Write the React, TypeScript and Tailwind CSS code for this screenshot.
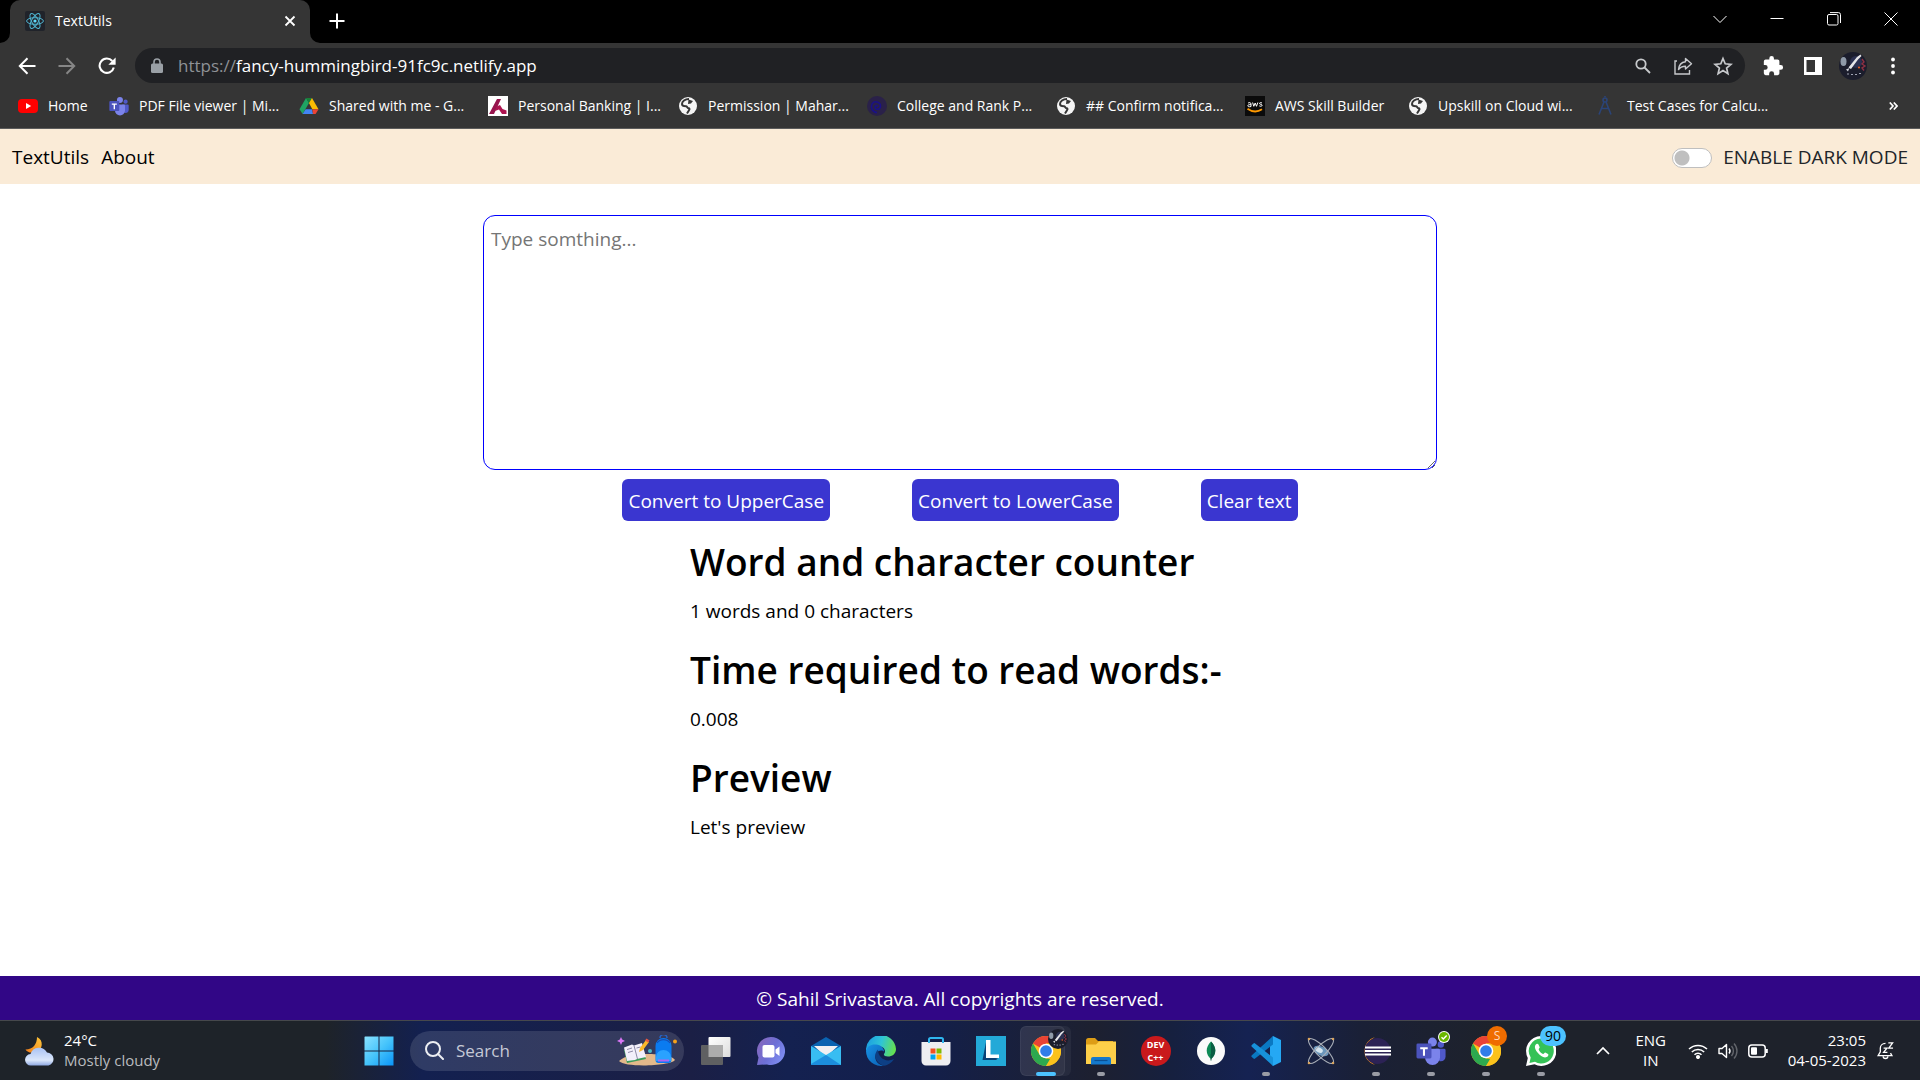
import React, { useState } from "react";
import type { ReactNode } from "react";

/* ---------- small icons ---------- */

const ReactLogo = () => (
  <svg viewBox="0 0 20 20" className="size-5">
    <rect width="20" height="20" rx="2" fill="#20232a" />
    <g fill="none" stroke="#4fb4d0" strokeWidth="1">
      <ellipse cx="10" cy="10" rx="8.4" ry="3.3" />
      <ellipse cx="10" cy="10" rx="8.4" ry="3.3" transform="rotate(60 10 10)" />
      <ellipse cx="10" cy="10" rx="8.4" ry="3.3" transform="rotate(120 10 10)" />
    </g>
    <circle cx="10" cy="10" r="1.6" fill="#61dafb" />
  </svg>
);

const YouTube = () => (
  <svg viewBox="0 0 20 20" className="size-5">
    <rect y="3" width="20" height="14" rx="4" fill="#f00" />
    <path d="M8 7l5.2 3L8 13z" fill="#fff" />
  </svg>
);

const Teams = ({ className }: { className: string }) => (
  <svg viewBox="0 0 32 32" className={className}>
    <circle cx="26.5" cy="9" r="3.4" fill="#5059c9" />
    <path d="M21 13.5h9a1.5 1.5 0 0 1 1.5 1.5v7a5 5 0 0 1-5 5H25z" fill="#5059c9" />
    <circle cx="17.5" cy="6.5" r="4.8" fill="#7b83eb" />
    <path d="M10 13.5h14a1.6 1.6 0 0 1 1.6 1.6V23a8 8 0 0 1-16 0z" fill="#7b83eb" />
    <rect x="0.5" y="8" width="16" height="16" rx="1.5" fill="#4b53bc" />
    <path d="M4.5 12h8v2H9.6v7H7.4v-7H4.5z" fill="#fff" />
  </svg>
);

const Drive = () => (
  <svg viewBox="0 0 20 20" className="size-5">
    <path d="M7 2L0.5 13.2 3.6 18 10 7z" fill="#1fa463" />
    <path d="M7 2h6L10 7z" fill="#188038" />
    <path d="M13 2l6.5 11.2h-6.2L10 7z" fill="#fbbc04" />
    <path d="M6.6 13.2L3.6 18H14l-1-4.8z" fill="#4285f4" />
    <path d="M13.3 13.2h6.2L16.6 18H14z" fill="#ea4335" />
  </svg>
);

const Axis = () => (
  <svg viewBox="0 0 20 20" className="size-5">
    <rect width="20" height="20" fill="#fff" />
    <path d="M9 3h4L6 18H1z" fill="#97144d" />
    <path d="M8.500 10.500l3.500-1.500 2.500 4 4 1.500V18h-4.500l-3-4.500-4 1.500z" fill="#ae1450" />
  </svg>
);

const Globe = () => (
  <svg viewBox="0 0 20 20" className="size-5">
    <circle cx="10" cy="10" r="9" fill="#f4f4f4" />
    <path d="M11 3C7 3 4 5.500 4 8c0 1.800 2.500 2.200 4 2.200 1.200 0 1 2 2.500 2 1.200 0 1.300 1 .5 2L9 17.500" fill="none" stroke="#353535" strokeWidth="2" />
    <path d="M10.500 3.500l4.500 1.500-2 2.500-3 .5z" fill="#353535" />
  </svg>
);

const Swirl = () => (
  <svg viewBox="0 0 20 20" className="size-5">
    <circle cx="10" cy="10" r="10" fill="#2a2149" />
    <path d="M10.500 10.500c0-1.500-2.500-1-2.500.8 0 3 5.500 2.700 5.500-1.300S7 4 5 8s1 8.500 5 8.500" fill="none" stroke="#1a1187" strokeWidth="1.600" />
  </svg>
);

const Aws = () => (
  <svg viewBox="0 0 20 20" className="size-5">
    <rect width="20" height="20" fill="#0b0b0b" />
    <path d="M3 7.200c1-1 3-.8 3 .8v2.500c-2 .5-3.200.2-3.200-.8S4.500 8.500 6 8.700M7.600 6.500l1.200 3.800L10.200 7l1.300 3.300 1.300-3.800M17 7c-1.200-.7-2.700-.3-2.500.6.2.9 2.700.6 2.600 1.800-.1 1-1.700 1.100-2.800.5" fill="none" stroke="#fff" strokeWidth="1" />
    <path d="M2.500 12.800c5 3.500 10 3.500 14.500.5" fill="none" stroke="#f90" strokeWidth="1.800" />
  </svg>
);

const Compass = () => (
  <svg viewBox="0 0 20 20" className="size-5">
    <g fill="none" stroke="#2b4478" strokeWidth="1.600">
      <circle cx="8" cy="4" r="2" />
      <path d="M8 1V0M7 6L2 18.500M9 6l5 12.500M4 12.500h8" />
    </g>
  </svg>
);

/* ---------- browser chrome ---------- */

const bookmarks: { label: string; icon: ReactNode; width: string }[] = [
  { label: "Home", icon: <YouTube />, width: "w-[91px]" },
  { label: "PDF File viewer | Mi...", icon: <Teams className="size-5" />, width: "w-[190px]" },
  { label: "Shared with me - G...", icon: <Drive />, width: "w-[189px]" },
  { label: "Personal Banking | I...", icon: <Axis />, width: "w-[190px]" },
  { label: "Permission | Mahar...", icon: <Globe />, width: "w-[189px]" },
  { label: "College and Rank P...", icon: <Swirl />, width: "w-[189px]" },
  { label: "## Confirm notifica...", icon: <Globe />, width: "w-[189px]" },
  { label: "AWS Skill Builder", icon: <Aws />, width: "w-[163px]" },
  { label: "Upskill on Cloud wi...", icon: <Globe />, width: "w-[189px]" },
  { label: "Test Cases for Calcu...", icon: <Compass />, width: "w-[189px]" },
];

const WindowButton = ({ label, children }: { label: string; children: ReactNode }) => (
  <button aria-label={label} className="flex h-[38px] w-[57px] items-center justify-center">
    <svg viewBox="0 0 14 14" className="size-3.5" fill="none" stroke="#fff" strokeWidth="1">
      {children}
    </svg>
  </button>
);

const IconButton = ({ label, children }: { label: string; children: ReactNode }) => (
  <button aria-label={label} className="flex h-9 w-10 items-center justify-center">
    {children}
  </button>
);

const TabStrip = () => (
  <div className="flex h-[43px] bg-black pr-px pl-2.5">
    <div className="relative flex w-[300px] items-center rounded-t-[10px] bg-[#353535] pr-3 pb-0.5 pl-[15px]">
      <svg viewBox="0 0 10 10" className="absolute bottom-0 -left-2.5 size-2.5">
        <path d="M10 0v10H0A10 10 0 0 0 10 0z" fill="#353535" />
      </svg>
      <svg viewBox="0 0 10 10" className="absolute -right-2.5 bottom-0 size-2.5">
        <path d="M0 0v10h10A10 10 0 0 1 0 0z" fill="#353535" />
      </svg>
      <ReactLogo />
      <span className="ml-2.5 flex-1 text-sm text-white">TextUtils</span>
      <button aria-label="Close tab" className="flex size-4 items-center justify-center">
        <svg viewBox="0 0 12 12" className="size-3" stroke="#fff" strokeWidth="1.800">
          <path d="M1.500 1.500l9 9M10.500 1.500l-9 9" />
        </svg>
      </button>
    </div>
    <button aria-label="New tab" className="ml-[17px] flex h-[42px] w-5 items-center justify-center">
      <svg viewBox="0 0 16 16" className="size-4" stroke="#fff" strokeWidth="2">
        <path d="M8 0.500v15M0.500 8h15" />
      </svg>
    </button>
    <div className="ml-auto flex">
      <WindowButton label="Search tabs">
        <path d="M0.500 4L7 10.500 13.500 4" />
      </WindowButton>
      <WindowButton label="Minimize">
        <path d="M0.500 6.500h13" />
      </WindowButton>
      <WindowButton label="Restore">
        <rect x="0.500" y="2.500" width="10.500" height="10.500" rx="1.500" />
        <path d="M3 0.600h8.500a2 2 0 0 1 2 2V11" />
      </WindowButton>
      <WindowButton label="Close">
        <path d="M0.500 0.500l13 13M13.500 0.500l-13 13" />
      </WindowButton>
    </div>
  </div>
);

const AddressBar = () => (
  <div className="flex h-[45px] items-center bg-[#353535] pr-[7px] pl-[7px]">
    <IconButton label="Back">
      <svg viewBox="0 0 18 18" className="size-[18px]" fill="none" stroke="#fff" strokeWidth="2">
        <path d="M17.500 9H2M9.500 1.300L1.800 9l7.700 7.700" />
      </svg>
    </IconButton>
    <IconButton label="Forward">
      <svg viewBox="0 0 18 18" className="size-[18px]" fill="none" stroke="#868686" strokeWidth="2">
        <path d="M0.500 9H16M8.500 1.300L16.200 9l-7.700 7.700" />
      </svg>
    </IconButton>
    <IconButton label="Reload">
      <svg viewBox="0 0 18 18" className="size-[18px]">
        <path d="M15.800 10.500A7.200 7.200 0 1 1 14.300 4" fill="none" stroke="#fff" strokeWidth="2.100" />
        <path d="M17.600 0.500v7.300h-7.300z" fill="#fff" />
      </svg>
    </IconButton>
    <div className="ml-2 flex h-[35px] flex-1 items-center rounded-full bg-[#202124] pr-0.5 pl-4">
      <svg viewBox="0 0 12 16" className="h-4 w-3">
        <rect y="5.500" width="12" height="9.500" rx="1.500" fill="#9aa0a6" />
        <path d="M3 6V4a3 3 0 0 1 6 0v2" fill="none" stroke="#9aa0a6" strokeWidth="1.600" />
      </svg>
      <span className="ml-[15px] flex-1 text-[17px] text-white">
        <span className="text-[#8e9196]">https://</span>fancy-hummingbird-91fc9c.netlify.app
      </span>
      <IconButton label="Zoom">
        <svg viewBox="0 0 16 16" className="size-4" fill="none" stroke="#c7c9cc" strokeWidth="1.800">
          <circle cx="6" cy="6" r="4.700" />
          <path d="M9.500 9.500l5.500 5.500" />
        </svg>
      </IconButton>
      <IconButton label="Share">
        <svg viewBox="0 0 20 20" className="size-5" fill="none" stroke="#c7c9cc" strokeWidth="1.400">
          <path d="M4 5H2v13h14.500v-4" />
          <path d="M12.500 2.500l6 5.300-6 5.300V10.300c-3.500 0-5.500 1-7 3.200.4-4.500 3-7.300 7-7.800z" strokeLinejoin="round" />
        </svg>
      </IconButton>
      <IconButton label="Bookmark this tab">
        <svg viewBox="0 0 20 20" className="size-5" fill="none" stroke="#c7c9cc" strokeWidth="1.700">
          <path d="M10 2.500l2.200 5.300 5.700.5-4.300 3.700 1.300 5.600L10 14.600l-4.900 3 1.300-5.600L2.100 8.300l5.700-.5z" />
        </svg>
      </IconButton>
    </div>
    <div className="ml-2 flex">
      <IconButton label="Extensions">
        <svg viewBox="0 0 24 24" className="size-[22px]" fill="#fff">
          <path d="M20.500 11H19V7a2 2 0 0 0-2-2h-4V3.500a2.500 2.500 0 0 0-5 0V5H4a2 2 0 0 0-2 2v3.800h1.500a2.700 2.700 0 0 1 0 5.400H2V20a2 2 0 0 0 2 2h3.800v-1.500a2.700 2.700 0 0 1 5.400 0V22H17a2 2 0 0 0 2-2v-4h1.500a2.500 2.500 0 0 0 0-5z" />
        </svg>
      </IconButton>
      <IconButton label="Side panel">
        <svg viewBox="0 0 18 18" className="size-[18px]">
          <path d="M0 0h18v18H0zM2.500 3v12H11V3z" fill="#fff" fillRule="evenodd" />
        </svg>
      </IconButton>
      <IconButton label="Profile">
        <Avatar className="size-7" />
      </IconButton>
      <IconButton label="Menu">
        <svg viewBox="0 0 4 18" className="h-[18px] w-1" fill="#fff">
          <circle cx="2" cy="2.500" r="1.900" />
          <circle cx="2" cy="9" r="1.900" />
          <circle cx="2" cy="15.500" r="1.900" />
        </svg>
      </IconButton>
    </div>
  </div>
);

const Avatar = ({ className }: { className: string }) => (
  <svg viewBox="0 0 28 28" className={className}>
    <circle cx="14" cy="14" r="14" fill="#1b1d2c" />
    <circle cx="17" cy="10" r="6" fill="#2b3050" />
    <ellipse cx="4.500" cy="9.500" rx="3" ry="4.500" fill="#8f9aa8" />
    <path d="M9.500 15.500L18 5l3.500-2.500 1 1.500-3.500 3.500L12 17z" fill="#e5e5e8" />
    <path d="M7 17.500l3.500-1.500-1.500 3.500z" fill="#d5d7de" />
    <path d="M8 22h2M12 22.500h2M16 22.500h2M20 21.500h2" stroke="#9fa3b2" strokeWidth="1.200" />
    <path d="M23 7l2 3-2 2 3 2-3 2 2 2.500" fill="none" stroke="#8d3042" strokeWidth="1.400" />
    <circle cx="20" cy="15.500" r="1.100" fill="#e2571d" />
  </svg>
);

const BookmarkBar = () => (
  <div className="flex h-[41px] items-center border-b border-[#5c5c5c] bg-[#353535] pr-[19px] pb-1 pl-[18px]">
    {bookmarks.map((b) => (
      <div key={b.label} className={b.width}>
        <a href="#" className="flex items-center gap-2.5 text-sm whitespace-nowrap text-white">
          <span className="shrink-0">{b.icon}</span>
          {b.label}
        </a>
      </div>
    ))}
    <button aria-label="More bookmarks" className="ml-auto w-3">
      <svg viewBox="0 0 9 8" className="h-2 w-[9px]" fill="none" stroke="#fff" strokeWidth="1.700">
        <path d="M0.800 0.500L4 4 .8 7.500M4.800 0.500L8 4 4.800 7.500" />
      </svg>
    </button>
  </div>
);

/* ---------- page ---------- */

const Navbar = ({ dark, onToggle }: { dark: boolean; onToggle: () => void }) => (
  <nav className="flex h-[55px] items-center justify-between bg-[#faebd7] px-3 pt-0.5 text-[19px] text-[#212529]">
    <div className="flex gap-3 text-black">
      <a href="#">TextUtils</a>
      <a href="#about">About</a>
    </div>
    <label className="flex items-center gap-[11px]">
      <input
        type="checkbox"
        role="switch"
        checked={dark}
        onChange={onToggle}
        className="h-5 w-10 appearance-none rounded-full border border-[#bfbfbf] bg-white bg-[radial-gradient(circle_at_9px_9px,#bfbfbf_7px,transparent_8px)] checked:bg-[#3a36d0]"
      />
      ENABLE DARK MODE
    </label>
  </nav>
);

const Stat = ({ title, children }: { title: string; children: ReactNode }) => (
  <section className="mb-5">
    <h2 className="mb-2.5 text-[37px] leading-[48px] font-semibold whitespace-nowrap">{title}</h2>
    <p className="text-[19px] leading-[30px]">{children}</p>
  </section>
);

const actionClass = "h-[42px] rounded-md bg-[#3a36d0] px-1.5 pt-0.5 text-[19px] leading-[30px] text-white";

const TextForm = () => {
  const [text, setText] = useState("");
  const words = text.split(" ").length;
  return (
    <main className="flex flex-1 flex-col items-center bg-white pt-[31px] text-black">
      <textarea
        aria-label="Text"
        placeholder="Type somthing..."
        value={text}
        onChange={(e) => setText(e.target.value)}
        className="h-[255px] w-[954px] max-w-full shrink-0 resize rounded-xl border border-[#0000ff] px-[7px] py-2 text-[19px] leading-[30px] outline-none placeholder:text-[#757575]"
      />
      <div className="mt-[9px] flex gap-[82px]">
        <button className={actionClass} onClick={() => setText(text.toUpperCase())}>
          Convert to UpperCase
        </button>
        <button className={actionClass} onClick={() => setText(text.toLowerCase())}>
          Convert to LowerCase
        </button>
        <button className={actionClass} onClick={() => setText("")}>
          Clear text
        </button>
      </div>
      <div className="mt-[17px] w-[540px]">
        <Stat title="Word and character counter">
          {words} words and {text.length} characters
        </Stat>
        <Stat title="Time required to read words:-">{0.008 * words}</Stat>
        <Stat title="Preview">{text || "Let's preview"}</Stat>
      </div>
    </main>
  );
};

/* ---------- taskbar ---------- */

const Weather = () => (
  <svg viewBox="0 0 30 30" className="size-[30px]">
    <defs>
      <linearGradient id="moon" x1="1" y1="0" x2="0" y2="1">
        <stop offset="0" stopColor="#ffc83a" />
        <stop offset="1" stopColor="#ee7a1a" />
      </linearGradient>
      <linearGradient id="cloud" x1="0" y1="0" x2="0" y2="1">
        <stop offset="0" stopColor="#a9c2f4" />
        <stop offset="0.700" stopColor="#dbe7fb" />
        <stop offset="1" stopColor="#8fa9e2" />
      </linearGradient>
    </defs>
    <path d="M12 1c7 3 6 13-1 15.500C6 18 1.500 15.500.5 13.500 8 13.500 12 8 12 1z" fill="url(#moon)" />
    <path d="M6 29.500a5.700 5.700 0 0 1-.5-11.400A9 9 0 0 1 22 16.500a6.600 6.600 0 0 1 1.500 13z" fill="url(#cloud)" />
  </svg>
);

const WindowsLogo = () => (
  <svg viewBox="0 0 30 30" className="size-[30px]">
    <defs>
      <linearGradient id="win" x1="0" y1="0" x2="1" y2="1">
        <stop offset="0" stopColor="#8ae2ff" />
        <stop offset="0.500" stopColor="#46c4fb" />
        <stop offset="1" stopColor="#0a94f8" />
      </linearGradient>
    </defs>
    <path d="M1 .5h13.500v14H.5V1zM15.500.5h14v14h-14zM.5 15.500h14v14H.5zM15.500 15.500h14v14h-14z" fill="url(#win)" />
  </svg>
);

const SearchArt = () => (
  <svg viewBox="0 0 60 32" className="h-8 w-[60px]">
    <path d="M2 26C8 21 16 19 26 19s28 0 32 6c-4 6-50 8-56 1z" fill="#e3b98b" />
    <path d="M4 2l1.200 2.500L8 6 5.200 7.300 4 10 2.800 7.300 0 6l2.800-1.500z" fill="#d876f5" />
    <path d="M7 15l17-4 5 13-19 4z" fill="#3c9c5a" />
    <path d="M7 12.500l8-3 2 1 8-2.500 4 14-9 2-2 1-8 1z" fill="#f2effa" />
    <path d="M17 10.500L20.500 24M10 14.500l5-1.500M11 17.500l5-1.500M19.500 13l4-1" stroke="#8e8ba8" fill="none" />
    <path d="M22 17l1-4 6-8 3 2-6 8z" fill="#fbb829" />
    <path d="M28 5.500l1.500-2 3 2L31 7.500z" fill="#ea5a41" />
    <circle cx="33" cy="16" r="2" fill="#4bb9c8" />
    <circle cx="58" cy="6.500" r="2" fill="#f6a21a" />
    <path d="M43 3a3 3 0 0 1 7 0" stroke="#2765c9" strokeWidth="1.500" fill="none" />
    <path d="M38.500 11a8 8 0 0 1 16 0v14a3 3 0 0 1-3 3h-10a3 3 0 0 1-3-3z" fill="#0a7bf0" />
    <path d="M39 22a7.500 7 0 0 1 15 0v4H39z" fill="#2aa2ff" />
    <path d="M40 8a8 8 0 0 1 13 0" stroke="#1550b7" fill="none" strokeWidth="1.200" />
    <path d="M41 25.500h11" stroke="#b065f0" strokeWidth="2" />
  </svg>
);

const TaskView = () => (
  <svg viewBox="0 0 30 30" className="size-[30px]">
    <defs>
      <linearGradient id="tv" x1="0" y1="0" x2="1" y2="1">
        <stop offset="0" stopColor="#fff" />
        <stop offset="1" stopColor="#dcdcdc" />
      </linearGradient>
    </defs>
    <rect x="7.500" y="1" width="22" height="20" rx="1" fill="url(#tv)" />
    <rect x="0" y="9" width="22" height="20" rx="1" fill="#5f6062" />
    <rect x="7.500" y="9" width="14.500" height="12" fill="#acacac" />
  </svg>
);

const Chat = () => (
  <svg viewBox="0 0 30 30" className="size-[30px]">
    <defs>
      <linearGradient id="chat" x1="0" y1="0" x2="1" y2="0.600">
        <stop offset="0" stopColor="#8b67b8" />
        <stop offset="0.600" stopColor="#6d6fd6" />
        <stop offset="1" stopColor="#7d8cf0" />
      </linearGradient>
    </defs>
    <path d="M15 1a14 14 0 1 1-4 27.400L1 29l1.500-7.500A14 14 0 0 1 15 1z" fill="url(#chat)" />
    <rect x="6.500" y="9" width="12" height="12.500" rx="2" fill="#fff" />
    <path d="M19.500 13.500l4-3v9.500l-4-3z" fill="#fff" />
  </svg>
);

const Mail = () => (
  <svg viewBox="0 0 30 30" className="size-[30px]">
    <path d="M0 10L15 1l15 9v19H0z" fill="#0a63b1" />
    <path d="M3 10h24l-12 11z" fill="#f0f0f2" />
    <path d="M30 10v19H0V10l15 9z" fill="#38bdf2" />
    <path d="M15 19l15 10H0V28z" fill="#1c8edd" />
  </svg>
);

const Edge = () => (
  <svg viewBox="0 0 30 30" className="size-[30px]">
    <defs>
      <linearGradient id="edge1" x1="0" y1="0.300" x2="1" y2="0.500">
        <stop offset="0" stopColor="#1b9de2" />
        <stop offset="0.500" stopColor="#2fc4d6" />
        <stop offset="1" stopColor="#66e04e" />
      </linearGradient>
      <linearGradient id="edge2" x1="0" y1="0" x2="1" y2="1">
        <stop offset="0" stopColor="#1793e6" />
        <stop offset="1" stopColor="#0b5fb4" />
      </linearGradient>
    </defs>
    <path d="M0 15A15 15 0 0 1 30 13c0 5-4 7.500-8 7.500-3 0-4.500-1-4-2.500 3-4-1-8-6-8S2 12 0 15z" fill="url(#edge1)" />
    <path d="M0 15c1-5 5.500-7 10-6.500 5 .5 8 3.500 8 7-1-1.500-6-2-8 2-2.500 6 2 11.500 8 12.200A15 15 0 0 1 0 15z" fill="url(#edge2)" />
    <path d="M12 13.500C7 18 9 27.500 18 29.700c4-.5 8-3.200 10-6.700-8 4-16-1-16-9.500z" fill="#0d3f85" />
  </svg>
);

const Store = () => (
  <svg viewBox="0 0 30 30" className="size-[30px]">
    <path d="M.5 6h29v19a4.500 4.500 0 0 1-4.500 4.500H5A4.500 4.500 0 0 1 .5 25z" fill="#eeeef1" />
    <path d="M8 7V3.500A1.500 1.500 0 0 1 9.500 2h11A1.500 1.500 0 0 1 22 3.500V7" fill="none" stroke="#2fb6ee" strokeWidth="2" />
    <path d="M9.500 12.500h5v5h-5z" fill="#f25022" />
    <path d="M15.500 12.500h5v5h-5z" fill="#7fba00" />
    <path d="M9.500 18.500h5v5h-5z" fill="#00a4ef" />
    <path d="M15.500 18.500h5v5h-5z" fill="#ffb900" />
  </svg>
);

const LApp = () => (
  <svg viewBox="0 0 30 30" className="size-[30px]">
    <rect width="30" height="30" fill="#23a9d8" />
    <path d="M10 6L6.500 24H20l2-1.500-11-2z" fill="#0a4377" />
    <path d="M10 4h4.500v14.500H23V22H10z" fill="#fff" />
  </svg>
);

const Chrome = () => (
  <svg viewBox="0 0 30 30" className="size-[30px]">
    <circle cx="15" cy="15" r="15" fill="#fbc21c" />
    <path d="M15 15L2 7.500A15 15 0 0 1 28 7.500H15z" fill="#ea4335" />
    <path d="M2 7.500l6.500 11.300L15 22.500l5 .5-5 7A15 15 0 0 1 2 7.500z" fill="#2da94f" />
    <path d="M15 7.500h13A15 15 0 0 1 15 30l6.500-11.200z" fill="#fbc21c" />
    <circle cx="15" cy="15" r="7.300" fill="#fff" />
    <circle cx="15" cy="15" r="5.800" fill="#2f7de9" />
  </svg>
);

const Folder = () => (
  <svg viewBox="0 0 30 30" className="size-[30px]">
    <path d="M0 4.500A2.500 2.500 0 0 1 2.500 2H9l3 3h15v8H0z" fill="#dd9d16" />
    <path d="M0 8.500h10L13 5.500h17V28H0z" fill="#fdcf49" />
    <path d="M5 28.500V23a2 2 0 0 1 2-2h16a2 2 0 0 1 2 2v5.500z" fill="#1579cc" />
    <path d="M8.500 24.500h13" stroke="#0b4f92" strokeWidth="1.200" />
  </svg>
);

const DevCpp = () => (
  <span className="flex size-[30px] flex-col items-center justify-center rounded-full bg-[#c9191c] text-[9px] leading-[13px] font-bold text-white">
    <span>DEV</span>
    <span>C++</span>
  </span>
);

const Mongo = () => (
  <svg viewBox="0 0 30 30" className="size-[30px]">
    <circle cx="15" cy="15" r="14" fill="#fafafa" />
    <path d="M15 5.500c6 6 5.500 13 0 17.500-5.500-4.500-6-11.500 0-17.500z" fill="#0e8a56" />
    <path d="M15 5.500c6 6 5.500 13 0 17.500z" fill="#0b5d43" />
    <path d="M15 18v6.500" stroke="#0b5d43" />
  </svg>
);

const VSCode = () => (
  <svg viewBox="0 0 30 30" className="size-[30px]">
    <path d="M22 0l-3 7v16l3 7 8-4V4z" fill="#25a8f4" />
    <path d="M22 0L.8 19.300a1.200 1.200 0 0 0 0 1.700l1.700 1.600a1.200 1.200 0 0 0 1.600 0L22 8.500z" fill="#0a78c2" />
    <path d="M22 30L.8 10.700a1.200 1.200 0 0 1 0-1.700l1.700-1.600a1.200 1.200 0 0 1 1.600 0L22 21.500z" fill="#1791da" />
  </svg>
);

const Atom = () => (
  <svg viewBox="0 0 30 30" className="size-[30px]">
    <ellipse cx="15" cy="15" rx="8" ry="4.500" transform="rotate(25 15 15)" fill="#7fb3d9" opacity="0.800" />
    <ellipse cx="13" cy="14" rx="4" ry="2.500" transform="rotate(25 13 14)" fill="#d3e3ee" />
    <g fill="none" stroke="#a9afb9" strokeWidth="1.100">
      <ellipse cx="15" cy="15" rx="17" ry="5" transform="rotate(45 15 15)" />
      <ellipse cx="15" cy="15" rx="17" ry="5" transform="rotate(-45 15 15)" />
    </g>
    <g fill="#d9a561">
      <circle cx="3" cy="3" r="1.300" />
      <circle cx="27" cy="3" r="1.300" />
      <circle cx="3" cy="27" r="1.300" />
      <circle cx="27" cy="27" r="1.300" />
    </g>
  </svg>
);

const Eclipse = () => (
  <svg viewBox="0 0 30 30" className="size-[30px]">
    <path d="M14 1a14.500 14.500 0 0 0 0 28A16 16 0 0 1 14 1z" fill="#f7941e" />
    <circle cx="16.500" cy="15" r="13" fill="#2c2255" />
    <path d="M4 11.500h26M4 15h26M4 18.500h26" stroke="#fff" strokeWidth="1.900" />
  </svg>
);

const WhatsApp = () => (
  <svg viewBox="0 0 30 30" className="size-[30px]">
    <path d="M15 0a15 15 0 1 1-6.500 28.300L0 30l1.800-8A15 15 0 0 1 15 0z" fill="#fff" />
    <path d="M15 2.500a12.500 12.500 0 1 1-6 23.300L3.500 27l1.200-5.400A12.500 12.500 0 0 1 15 2.500z" fill="#35c257" />
    <path d="M10.500 8c-2 1.500-2.500 4 1 8.500s8 6.500 10.500 3.500c.7-1 .5-1.500 0-2l-2.700-1.500c-1 0-1.300 1.700-2.300 1.500-2-1-3.500-2.500-4.300-4.500 0-1 1-1.200 1-2.200L12.500 8.500c-.5-.8-1.300-1-2-.5z" fill="#fff" />
  </svg>
);

type App = { name: string; icon: ReactNode; badge?: ReactNode; running?: boolean; active?: boolean };

const apps: App[] = [
  { name: "Task view", icon: <TaskView /> },
  { name: "Chat", icon: <Chat /> },
  { name: "Mail", icon: <Mail /> },
  { name: "Edge", icon: <Edge /> },
  { name: "Microsoft Store", icon: <Store /> },
  { name: "L", icon: <LApp /> },
  {
    name: "Chrome",
    icon: <Chrome />,
    active: true,
    badge: <Avatar className="absolute top-[3px] right-[5px] size-5" />,
  },
  { name: "File Explorer", icon: <Folder />, running: true },
  { name: "Dev-C++", icon: <DevCpp /> },
  { name: "MongoDB Compass", icon: <Mongo /> },
  { name: "Visual Studio Code", icon: <VSCode />, running: true },
  { name: "Atom", icon: <Atom /> },
  { name: "Eclipse", icon: <Eclipse />, running: true },
  {
    name: "Teams",
    icon: <Teams className="size-[30px]" />,
    running: true,
    badge: (
      <svg viewBox="0 0 12 12" className="absolute top-[5px] right-2 size-3">
        <circle cx="6" cy="6" r="6" fill="#fff" />
        <circle cx="6" cy="6" r="5" fill="#6bb700" />
        <path d="M3.500 6.200l1.800 1.800L8.700 4.500" fill="none" stroke="#fff" strokeWidth="1.400" />
      </svg>
    ),
  },
  {
    name: "Chrome profile S",
    icon: <Chrome />,
    running: true,
    badge: (
      <span className="absolute top-0 right-1.5 flex size-5 items-center justify-center rounded-full bg-[#ef6c00] text-xs text-[#ffd9bd]">
        S
      </span>
    ),
  },
  {
    name: "WhatsApp",
    icon: <WhatsApp />,
    running: true,
    badge: (
      <span className="absolute top-0 right-0.5 flex h-5 w-[26px] items-center justify-center rounded-full bg-[#4cc2ff] text-sm text-black">
        90
      </span>
    ),
  },
];

const TaskbarApp = ({ app }: { app: App }) => (
  <button
    aria-label={app.name}
    className="relative flex h-[50px] w-[55px] items-center justify-center"
  >
    {app.active && (
      <>
        <span className="absolute inset-y-0 right-0.5 left-0.5 rounded-md bg-white/5" />
        <span className="absolute inset-y-0 right-2 left-0.5 rounded-md border border-white/5 bg-white/5" />
      </>
    )}
    <span className="relative">{app.icon}</span>
    {app.badge}
    {app.active && <span className="absolute bottom-0 h-1 w-5 rounded-full bg-[#4cc2ff]" />}
    {app.running && <span className="absolute bottom-0 h-1 w-2 rounded-full bg-[#9a9ca5]" />}
  </button>
);

const Taskbar = () => (
  <div className="flex h-[60px] items-center border-t border-[#46484c] bg-[linear-gradient(90deg,#1e2329_17%,#132050_22%,#1b1f45_36%,#142150_41%,#131f4b_48%,#1d2030_57%,#16203f_61%,#152252_65%,#1a2036_71%,#1e222b_78%)] text-[15px] leading-5 text-white">
    <button className="flex flex-1 items-center gap-[9px] pl-[25px] text-left">
      <Weather />
      <span className="flex flex-col pb-0.5">
        <span>24°C</span>
        <span className="text-[#b9bbbf]">Mostly cloudy</span>
      </span>
    </button>
    <div className="flex items-center">
      <button aria-label="Start" className="flex h-[50px] w-[55px] items-center justify-center">
        <WindowsLogo />
      </button>
      <label className="mx-1 flex h-10 w-[274px] items-center rounded-full bg-[#ffffff1f] pr-[7px] pl-[15px]">
        <svg viewBox="0 0 19 19" className="size-[19px] shrink-0" fill="none" stroke="#eceef2" strokeWidth="2">
          <circle cx="8" cy="8" r="7" />
          <path d="M13 13l5 5" strokeLinecap="round" />
        </svg>
        <input
          aria-label="Search"
          placeholder="Search"
          className="ml-3 min-w-0 flex-1 bg-transparent text-[17px] outline-none placeholder:text-[#c6c9d6]"
        />
        <SearchArt />
      </label>
      {apps.map((a) => (
        <TaskbarApp key={a.name} app={a} />
      ))}
    </div>
    <div className="flex flex-1 items-center justify-end pr-[26px]">
      <button aria-label="Hidden icons" className="w-3.5">
        <svg viewBox="0 0 14 9" className="h-[9px] w-3.5" fill="none" stroke="#fff" strokeWidth="1.700">
          <path d="M1 8l6-6 6 6" />
        </svg>
      </button>
      <button className="ml-[25px] w-8 pb-0.5 text-center">
        ENG
        <br />
        IN
      </button>
      <button aria-label="Network, sound and battery" className="ml-[21px] flex items-center gap-2.5">
        <svg viewBox="0 0 20 16" className="h-4 w-5" fill="none" stroke="#fff" strokeWidth="1.500">
          <path d="M1 6a13 13 0 0 1 18 0M3.800 9a9 9 0 0 1 12.400 0M6.500 11.800a5 5 0 0 1 7 0" />
          <circle cx="10" cy="14" r="1.300" fill="#fff" />
        </svg>
        <svg viewBox="0 0 20 18" className="h-[18px] w-5" fill="none" stroke="#fff" strokeWidth="1.400">
          <path d="M1 6.500h3L8.500 2.500v13L4 11.500H1z" strokeLinejoin="round" />
          <path d="M11 6.500a4 4 0 0 1 0 5" />
          <path d="M13.500 4a7.500 7.500 0 0 1 0 10M16 1.500a11 11 0 0 1 0 15" stroke="#62656b" />
        </svg>
        <svg viewBox="0 0 20 14" className="h-3.5 w-5" fill="none" stroke="#fff" strokeWidth="1.500">
          <rect x="0.800" y="1" width="16.400" height="12" rx="3" />
          <rect x="3" y="3.200" width="6" height="7.600" rx="1" fill="#fff" stroke="none" />
          <path d="M18.800 5v4" strokeWidth="2" />
        </svg>
      </button>
      <button className="ml-5 flex flex-col items-end pb-0.5">
        <span>23:05</span>
        <span>04-05-2023</span>
      </button>
      <button aria-label="Notifications" className="ml-[11px]">
        <svg viewBox="0 0 18 19" className="h-[19px] w-[17px]" fill="none" stroke="#fff" strokeWidth="1.400">
          <path d="M9 2C5.500 2 3.500 4.500 3.500 7v4L1.200 15h14.600l-1.500-2.700" />
          <path d="M6.500 15.500a2.500 2.500 0 0 0 5 0M7 7h3.500L7 11.500h4M12 1.500h4.500L12.500 7H17" />
        </svg>
      </button>
    </div>
  </div>
);

export default function App() {
  const [dark, setDark] = useState(false);
  return (
    <div className="flex min-h-screen flex-col font-['Open_Sans',sans-serif]">
      <header>
        <TabStrip />
        <AddressBar />
        <BookmarkBar />
      </header>
      <Navbar dark={dark} onToggle={() => setDark(!dark)} />
      <TextForm />
      <footer className="flex h-11 items-center justify-center bg-[#310686] pt-0.5 text-[19px] text-white">
        © Sahil Srivastava. All copyrights are reserved.
      </footer>
      <Taskbar />
    </div>
  );
}
